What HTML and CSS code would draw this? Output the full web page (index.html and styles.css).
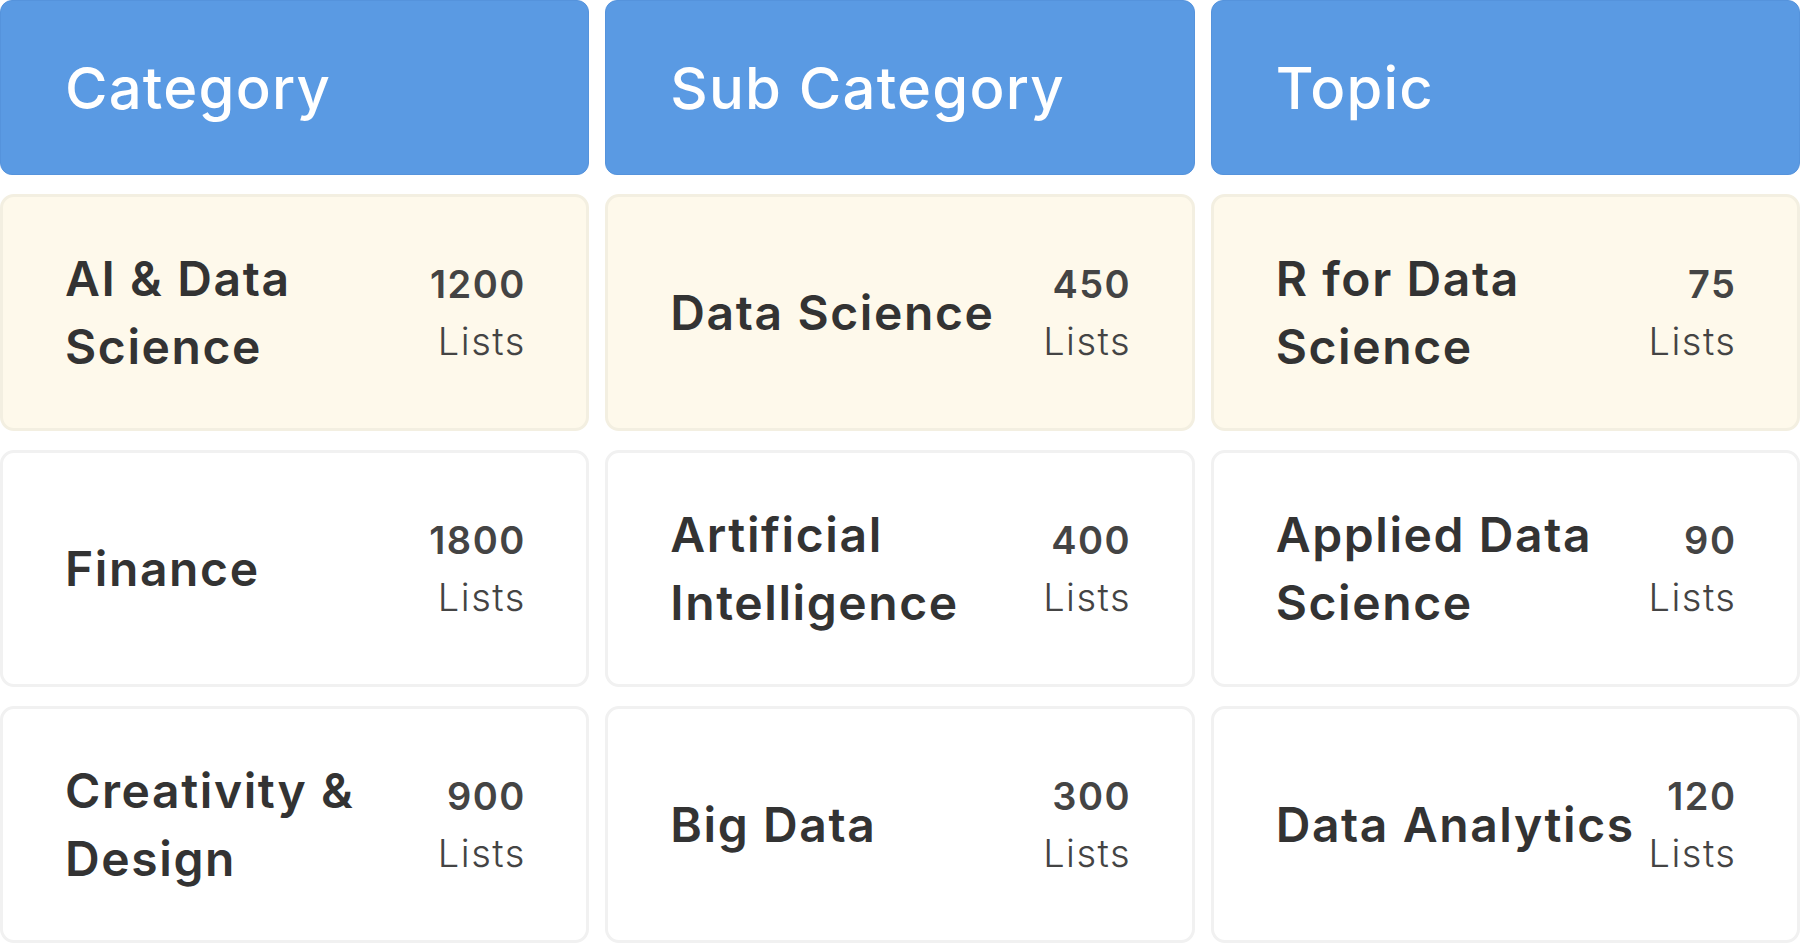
FILE: index.html
```html
<!DOCTYPE html>
<html lang="en">
<head>
    <meta charset="UTF-8">
    <meta name="viewport" content="width=device-width, initial-scale=1.0">
    <title>Browse Lists</title>
    <link rel="stylesheet" href="styles.css">
</head>
<body>
    <div class="board">
        <div class="col-head">Category</div>
        <div class="col-head">Sub Category</div>
        <div class="col-head">Topic</div>

        <div class="item selected">
            <div class="item-name">AI &amp; Data Science</div>
            <div class="item-count"><span class="num">1200</span><span class="unit">Lists</span></div>
        </div>
        <div class="item selected">
            <div class="item-name">Data Science</div>
            <div class="item-count"><span class="num">450</span><span class="unit">Lists</span></div>
        </div>
        <div class="item selected">
            <div class="item-name">R for Data Science</div>
            <div class="item-count"><span class="num">75</span><span class="unit">Lists</span></div>
        </div>

        <div class="item">
            <div class="item-name">Finance</div>
            <div class="item-count"><span class="num">1800</span><span class="unit">Lists</span></div>
        </div>
        <div class="item">
            <div class="item-name">Artificial Intelligence</div>
            <div class="item-count"><span class="num">400</span><span class="unit">Lists</span></div>
        </div>
        <div class="item">
            <div class="item-name">Applied Data Science</div>
            <div class="item-count"><span class="num">90</span><span class="unit">Lists</span></div>
        </div>

        <div class="item">
            <div class="item-name">Creativity &amp; Design</div>
            <div class="item-count"><span class="num">900</span><span class="unit">Lists</span></div>
        </div>
        <div class="item">
            <div class="item-name">Big Data</div>
            <div class="item-count"><span class="num">300</span><span class="unit">Lists</span></div>
        </div>
        <div class="item">
            <div class="item-name">Data Analytics</div>
            <div class="item-count"><span class="num">120</span><span class="unit">Lists</span></div>
        </div>
    </div>
</body>
</html>
```

FILE: styles.css
```css
body {
    margin: 0;
    background: #ffffff;
    font-family: Inter, "Open Sans", sans-serif;
    color: #333333;
}
.board {
    display: grid;
    grid-template-columns: repeat(3, 1fr);
    grid-template-rows: 175px repeat(3, 237px);
    column-gap: 16px;
    row-gap: 19px;
}
.col-head {
    display: flex;
    align-items: center;
    padding: 0 64px;
    background-color: #5a9ae3;
    border: 1px solid #5593dc;
    border-radius: 12px;
    color: #ffffff;
    font-size: 58px;
    font-weight: 500;
    letter-spacing: 1.2px;
}
.item {
    display: flex;
    align-items: center;
    gap: 10px;
    padding: 0 62px;
    background-color: #ffffff;
    border: 3px solid #f1f1f1;
    border-radius: 14px;
}
.item.selected {
    background-color: #fef9eb;
    border-color: #f3efe1;
}
.item-name {
    flex: 1;
    font-size: 48px;
    font-weight: 600;
    line-height: 68px;
    letter-spacing: 1.6px;
    color: #333333;
}
.item-count {
    display: flex;
    flex-direction: column;
    align-items: flex-end;
    margin-right: -1.5px;
    line-height: 57px;
    font-size: 38px;
    letter-spacing: 1.5px;
    color: #444444;
}
.item-count .num {
    font-weight: 600;
}
.item-count .unit {
    font-weight: 300;
}
```
